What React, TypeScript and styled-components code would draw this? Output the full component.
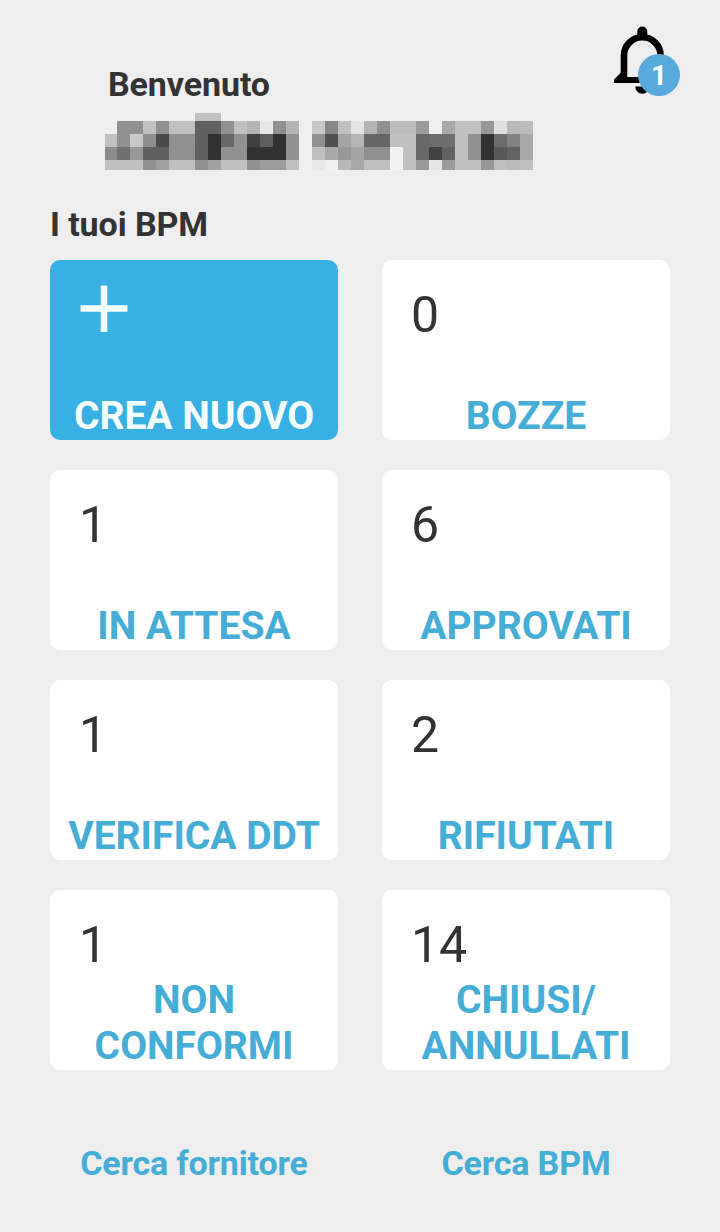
import React from "react";
import styled, { createGlobalStyle } from "styled-components";

const GlobalStyle = createGlobalStyle`
  *, *::before, *::after { box-sizing: border-box; }
  body {
    margin: 0;
    background: #eeeeee;
    font-family: Roboto, "Liberation Sans", sans-serif;
    color: #333333;
  }
`;

const Screen = styled.main`
  display: flex;
  flex-direction: column;
  height: 1232px;
  padding: 0 50px;
  background: #eeeeee;
`;

const Header = styled.header`
  display: flex;
  justify-content: space-between;
  height: 204px;
  padding: 64px 0 0 54px;
`;

const Heading = styled.h1`
  margin: 0;
  font-size: 34px;
  font-weight: 700;
  line-height: 40px;
  letter-spacing: -0.1px;
`;

const Welcome = styled.div`
  display: flex;
  flex-direction: column;
  gap: 9px;

  ${Heading} {
    padding-left: 4px;
  }
`;

const Mosaic = styled.svg`
  display: block;
  width: 442px;
  height: 58px;
`;

const BellButton = styled.button`
  position: relative;
  flex: none;
  width: 82px;
  height: 82px;
  margin: -46px -13px 0 0;
  padding: 0;
  border: 0;
  background: none;
  font-family: inherit;
`;

const BellIcon = styled.svg`
  display: block;
  width: 82px;
  height: 82px;
`;

const Badge = styled.span`
  position: absolute;
  left: 37px;
  top: 36px;
  width: 42px;
  height: 42px;
  border-radius: 50%;
  background: #58a9dc;
  color: #ffffff;
  font-size: 28px;
  font-weight: 700;
  line-height: 44px;
  text-align: center;
`;

const Grid = styled.section`
  display: grid;
  grid-template-columns: 288px 288px;
  grid-auto-rows: 180px;
  gap: 30px 44px;
  margin-top: 16px;
`;

const Card = styled.button<{ $primary?: boolean }>`
  display: flex;
  flex-direction: column;
  align-items: flex-start;
  padding: 0 0 1px;
  border: 0;
  border-radius: 10px;
  background: ${(p) => (p.$primary ? "#38b0e3" : "#ffffff")};
  color: ${(p) => (p.$primary ? "#f4ffff" : "#45add6")};
  font-family: inherit;
`;

const Count = styled.span`
  height: 60px;
  margin-top: 25px;
  padding-left: 29px;
  color: #333333;
  font-size: 50px;
  line-height: 60px;
`;

const PlusIcon = styled.svg`
  display: block;
  width: 48px;
  height: 48px;
  margin: 25px 0 0 30px;
  stroke: #f4ffff;
  stroke-width: 6.6;
`;

const Label = styled.span`
  width: 100%;
  margin-top: auto;
  font-size: 39px;
  font-weight: 700;
  line-height: 46px;
  text-align: center;
  white-space: pre-line;
`;

const Links = styled.nav`
  display: grid;
  grid-template-columns: 288px 288px;
  gap: 44px;
  margin-top: 73px;
`;

const Link = styled.a`
  color: #45add6;
  font-size: 34px;
  font-weight: 700;
  line-height: 40px;
  letter-spacing: -0.15px;
  text-align: center;
`;

// Grey levels of the pixelated user name, one row of blocks per entry.
const BLOCKS: { y: number; h: number; cells: string }[] = [
  { y: 0, h: 8, cells: "-- -- -- -- -- -- -- c0 c0" },
  {
    y: 8,
    h: 13,
    cells:
      "-- 91 91 c0 91 c0 c0 60 60 91 c0 b4 e8 90 b4 -- c8 88 c0 e4 b4 90 bc bc 9c -- a8 c0 c0 98 e0 b8 bc",
  },
  {
    y: 21,
    h: 13,
    cells:
      "c0 91 c8 8e 4a 91 91 60 32 68 91 40 5e 32 90 -- 90 50 a4 b6 66 66 c0 c0 68 6e 6e c0 90 32 6c 82 a8",
  },
  {
    y: 34,
    h: 13,
    cells:
      "8c 70 98 60 60 91 90 60 32 91 91 32 32 32 90 -- c0 a8 98 a4 90 90 f2 c0 68 42 62 c0 90 32 58 62 a8",
  },
  {
    y: 47,
    h: 10,
    cells:
      "c0 c0 c0 90 a0 c0 c0 90 a0 c0 c0 90 9c 9c c0 -- e8 f0 b8 a8 c0 c0 f2 c0 9a e6 9a c0 c0 98 c0 ba c0",
  },
];

const cards = [
  { label: "CREA NUOVO", primary: true },
  { label: "BOZZE", count: 0 },
  { label: "IN ATTESA", count: 1 },
  { label: "APPROVATI", count: 6 },
  { label: "VERIFICA DDT", count: 1 },
  { label: "RIFIUTATI", count: 2 },
  { label: "NON\nCONFORMI", count: 1 },
  { label: "CHIUSI/\nANNULLATI", count: 14 },
];

function HiddenName() {
  return (
    <Mosaic viewBox="0 0 442 58" shapeRendering="crispEdges" aria-hidden="true">
      {BLOCKS.map((row) =>
        row.cells.split(" ").map((g, i) =>
          g === "--" ? null : (
            <rect
              key={`${row.y}-${i}`}
              x={i === 0 ? 1 : i * 13}
              y={row.y}
              width={i === 0 ? 12 : 13}
              height={row.h}
              fill={`#${g}${g}${g}`}
            />
          )
        )
      )}
    </Mosaic>
  );
}

export default function App() {
  return (
    <>
      <GlobalStyle />
      <Screen>
        <Header>
          <Welcome>
            <Heading>Benvenuto</Heading>
            <HiddenName />
          </Welcome>
          <BellButton aria-label="Notifiche">
            <BellIcon viewBox="0 0 82 82">
              <path d="M36.3 18V13.5a5 5 0 0 1 10 0V18Z" />
              <path
                d="M23 62V37.6a18.3 18.3 0 0 1 36.6 0V62"
                fill="none"
                stroke="#000000"
                strokeWidth="6.6"
              />
              <path d="M13 65V61.6L20 54.5L24 59H59L63 54.5L70 61.6V65Z" />
              <path d="M34.3 68.6H48.3C48.3 72.6 45.2 75.8 41.3 75.8S34.3 72.6 34.3 68.6Z" />
            </BellIcon>
            <Badge>1</Badge>
          </BellButton>
        </Header>
        <Heading as="h2">I tuoi BPM</Heading>
        <Grid>
          {cards.map((c) => (
            <Card key={c.label} $primary={c.primary}>
              {c.primary ? (
                <PlusIcon viewBox="0 0 48 48">
                  <path d="M24 0.5V47M0.5 23.5H47.5" />
                </PlusIcon>
              ) : (
                <Count>{c.count}</Count>
              )}
              <Label>{c.label}</Label>
            </Card>
          ))}
        </Grid>
        <Links>
          <Link>Cerca fornitore</Link>
          <Link>Cerca BPM</Link>
        </Links>
      </Screen>
    </>
  );
}
